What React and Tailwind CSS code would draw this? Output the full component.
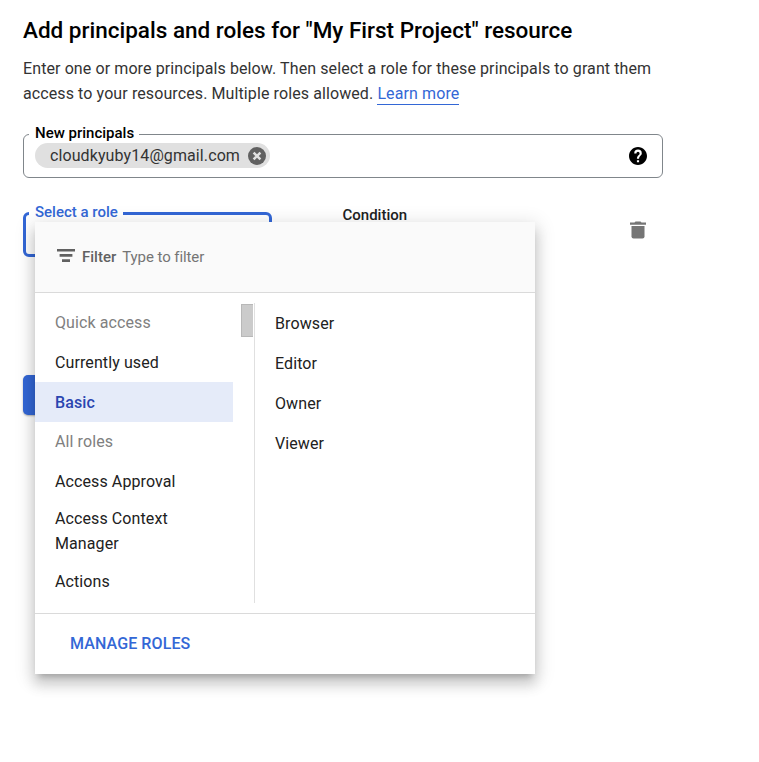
import React from 'react';

const categories = [
  { label: 'Quick access', heading: true },
  { label: 'Currently used' },
  { label: 'Basic', active: true },
  { label: 'All roles', heading: true, short: true },
  { label: 'Access Approval' },
  { label: 'Access Context Manager', tall: true },
  { label: 'Actions' },
];

const roles = ['Browser', 'Editor', 'Owner', 'Viewer'];

function HelpIcon() {
  return (
    <svg viewBox="2 2 20 20" className="w-[18px] h-[18px]" fill="#000">
      <path d="M12 2C6.48 2 2 6.48 2 12s4.48 10 10 10 10-4.48 10-10S17.52 2 12 2zm1.2 17h-2.4v-2.3h2.4V19zm2-7.7l-.9.9c-.7.7-1.1 1.4-1.1 2.9h-2.4v-.5c0-1.1.45-2.1 1.17-2.83l1.24-1.26c.37-.36.59-.86.59-1.41a1.8 1.8 0 0 0-3.6 0H7.8a4.2 4.2 0 0 1 8.4 0c0 .88-.36 1.68-1 2.2z" />
    </svg>
  );
}

function TrashIcon() {
  return (
    <svg viewBox="0 0 16 18" className="w-4 h-[18px]" fill="#757575">
      <path d="M0 1.5h4.5L5.5 .5h5l1 1H16v2.2H0z" />
      <path d="M1.5 5h13v10.5a2 2 0 0 1-2 2h-9a2 2 0 0 1-2-2z" />
    </svg>
  );
}

function RemoveIcon() {
  return (
    <svg viewBox="0 0 18 18" className="w-[18px] h-[18px]">
      <circle cx="9" cy="9" r="9" fill="#616161" />
      <path d="M5.6 5.6l6.8 6.8M12.4 5.6l-6.8 6.8" stroke="#e0e0e0" strokeWidth="2.5" />
    </svg>
  );
}

function FilterIcon() {
  return (
    <svg viewBox="0 0 18 13" className="w-[18px] h-[13px] -mt-[3px]" fill="#616161">
      <path d="M0 0h18v2.6H0zM2.6 5h12.8v2.7H2.6zM5 10.3h8V13H5z" />
    </svg>
  );
}

function CategoryRow({ item }) {
  let tone = 'text-[#212121]';
  if (item.heading) tone = 'text-[#808080]';
  if (item.active) tone = 'text-[#2a45b0] bg-[#e5ebf9] font-medium';

  let height = 'h-10';
  if (item.short) height = 'h-[39px]';
  if (item.tall) height = 'h-[60px] pb-px';

  return (
    <li className={`w-[198px] pl-5 pr-8 flex items-center shrink-0 leading-[25px] ${height} ${tone}`}>
      {item.label}
    </li>
  );
}

function RoleMenu() {
  return (
    <div className="absolute z-10 left-[9px] top-[7px] w-[500px] h-[452px] flex flex-col bg-white shadow-[0_6px_6px_-4px_rgba(0,0,0,0.2),0_10px_12px_1px_rgba(0,0,0,0.14),0_4px_18px_3px_rgba(0,0,0,0.12)]">
      <div className="h-[71px] pl-[22px] flex items-center bg-[#fafafa] border-b border-[#dadada] text-[15px] tracking-normal">
        <FilterIcon />
        <span className="ml-[7px] text-[#616161] font-medium">Filter</span>
        <span className="ml-[6px] text-[#757575] tracking-[-0.08px]">Type to filter</span>
      </div>

      <div className="h-[320px] pt-[10px] pb-[10px] flex">
        <div className="w-[220px] flex border-r border-[#e0e0e0] overflow-hidden">
          <ul className="flex flex-col -mt-px">
            {categories.map((item) => (
              <CategoryRow key={item.label} item={item} />
            ))}
          </ul>
          {/* scrollbar thumb */}
          <div className="ml-2 mt-px w-3 h-[33px] shrink-0 bg-[#cbcbcb] border border-r-0 border-[#b8b8b8]" />
        </div>
        <ul className="pl-5 pt-px text-[#212121]">
          {roles.map((role) => (
            <li key={role} className="h-10 flex items-center">{role}</li>
          ))}
        </ul>
      </div>

      <div className="flex-1 pl-[35px] flex items-center border-t border-[#dadada]">
        <button className="text-[#3367d6] font-medium">MANAGE ROLES</button>
      </div>
    </div>
  );
}

export default function App() {
  return (
    <div className="h-[762px] w-full overflow-hidden bg-white pl-[23px] pt-[15px] font-['Roboto',sans-serif] text-[16px] tracking-[0.1px]">
      <h1 className="text-[22.5px] leading-[30px] font-medium text-black tracking-normal">
        Add principals and roles for "My First Project" resource
      </h1>
      <p className="mt-[11px] w-[640px] leading-[25px] text-[#333]">
        Enter one or more principals below. Then select a role for these principals to grant them
        <br />
        access to your resources. Multiple roles allowed.{' '}
        <a className="pb-px text-[#3367d6] border-b border-[#3367d6]">Learn more</a>
      </p>

      <div className="relative mt-[28px] w-[640px] h-11 pl-[11px] pr-[15px] flex items-center justify-between border border-[#80868b] rounded-[6px]">
        <span className="absolute left-[5px] -top-[12px] pl-[6px] pr-[5px] bg-white text-[15px] leading-5 font-medium text-black tracking-normal">
          New principals
        </span>
        <div className="h-[25px] -mt-px pl-[15px] pr-1 flex items-center gap-[7.5px] bg-[#e0e0e0] rounded-full text-[#333]">
          cloudkyuby14@gmail.com
          <RemoveIcon />
        </div>
        <HelpIcon />
      </div>

      <div className="mt-[34px] flex items-start">
        <div className="relative w-[249px] h-[45px] border-3 border-[#3367d6] rounded-[6px]">
          <span className="absolute left-[3px] -top-[13px] pl-[6px] pr-[5px] bg-white text-[15px] leading-5 font-medium text-[#3367d6] tracking-normal">
            Select a role
          </span>
          <RoleMenu />
        </div>
        <span className="ml-[70.5px] -mt-[7px] w-[287px] text-[15px] leading-5 font-medium text-[#212121] tracking-normal">
          Condition
        </span>
        <div className="mt-[9px]">
          <TrashIcon />
        </div>
      </div>

      {/* submit button, mostly covered by the open menu */}
      <button aria-label="Save" className="block mt-[118px] w-[75px] h-10 bg-[#3367d6] rounded-[5px] shadow-[0_1px_2px_rgba(0,0,0,0.3)]" />
    </div>
  );
}
